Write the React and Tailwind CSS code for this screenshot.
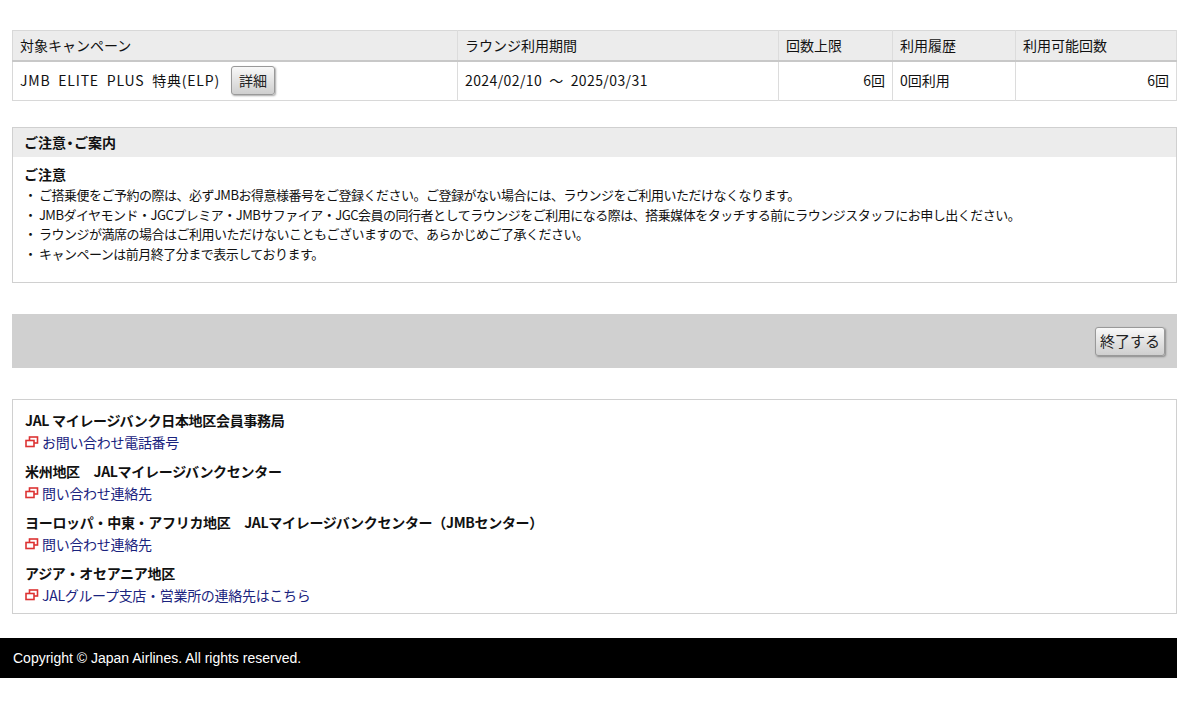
const F = {fontFamily: '"Noto Sans CJK JP","Liberation Sans",sans-serif'};
function Ext(){return(<svg width="14" height="12" viewBox="0 0 14 12" className="mr-[3px] shrink-0"><rect x="4.5" y="1" width="8" height="6" fill="none" stroke="#d33" strokeWidth="1.6"/><rect x="1" y="4.5" width="8" height="6" fill="#fff" stroke="#d33" strokeWidth="1.6"/></svg>);}
function Btn({children,cls}){return <span className={"inline-flex items-center justify-center rounded-[3px] border border-[#999] bg-gradient-to-b from-[#f8f8f8] to-[#cfcfcf] shadow-[1px_1px_2px_rgba(0,0,0,0.35)] text-[#222] "+cls}>{children}</span>}
export default function App(){
const th="bg-[#ececec] border-r border-[#dcdcdc] px-[7px] text-left font-normal h-[30px]";
const td="border-r border-[#dcdcdc] px-[7px] h-[40px]";
return(<div style={F} className="w-[1200px] h-[714px] bg-white text-[14px] text-[#111] pt-[30px]">
<div className="ml-[12px] w-[1165px]">
<table className="w-full border border-[#d8d8d8] border-collapse">
<thead><tr className="border-b-2 border-[#c8c8c8]">
<th className={th+" w-[445px]"}>対象キャンペーン</th><th className={th+" w-[321px]"}>ラウンジ利用期間</th><th className={th+" w-[114px]"}>回数上限</th><th className={th+" w-[123px]"}>利用履歴</th><th className={th}>利用可能回数</th></tr></thead>
<tbody><tr><td className={td}><span className="inline-flex items-center gap-[11px]"><span className="tracking-[0.8px]">JMB&nbsp; ELITE&nbsp; PLUS&nbsp; 特典(ELP)</span><Btn cls="w-[44px] h-[29px] text-[14px]">詳細</Btn></span></td>
<td className={td+" tracking-[0.4px]"}>2024/02/10&nbsp;&nbsp;～&nbsp;&nbsp;2025/03/31</td><td className={td+" text-right"}>6回</td><td className={td}>0回利用</td><td className={td+" text-right"}>6回</td></tr></tbody></table>
<div className="mt-[26px] border border-[#d0d0d0] h-[156px]">
<div className="bg-[#ececec] h-[29px] flex items-center px-[11px] font-bold">ご注意<span className="-mx-[3px]">・</span>ご案内</div>
<div className="px-[11px] pt-[6px] text-[13px] leading-[19.5px] tracking-[-0.5px]">
<div className="font-bold text-[14px] leading-[22px] tracking-normal">ご注意</div>
<div>・ ご搭乗便をご予約の際は、必ずJMBお得意様番号をご登録ください。ご登録がない場合には、ラウンジをご利用いただけなくなります。</div>
<div>・ JMBダイヤモンド・JGCプレミア・JMBサファイア・JGC会員の同行者としてラウンジをご利用になる際は、搭乗媒体をタッチする前にラウンジスタッフにお申し出ください。</div>
<div>・ ラウンジが満席の場合はご利用いただけないこともございますので、あらかじめご了承ください。</div>
<div>・ キャンペーンは前月終了分まで表示しております。</div></div></div>
<div className="mt-[31px] bg-[#d0d0d0] h-[54px] flex items-center justify-end pr-[12px]"><Btn cls="w-[70px] h-[29px] text-[15px]">終了する</Btn></div>
<div className="mt-[31px] border border-[#d0d0d0] h-[215px] px-[12px] pt-[9px]">
{[["JAL マイレージバンク日本地区会員事務局","お問い合わせ電話番号"],["米州地区　JALマイレージバンクセンター","問い合わせ連絡先"],["ヨーロッパ・中東・アフリカ地区　JALマイレージバンクセンター（JMBセンター）","問い合わせ連絡先"],["アジア・オセアニア地区","JALグループ支店・営業所の連絡先はこちら"]].map(([a,b])=>(
<div key={a} className="h-[51px]"><div className="font-bold leading-[22px] tracking-[-0.3px]">{a}</div><div className="flex items-center text-[#1a237e] leading-[22px] tracking-[-0.3px]"><Ext/>{b}</div></div>))}
</div></div>
<div className="mt-[24px] w-[1177px] h-[40px] bg-black text-white text-[14px] flex items-center pl-[13px]" style={{fontFamily:'"Liberation Sans",sans-serif'}}>Copyright © Japan Airlines. All rights reserved.</div>
</div>);}
